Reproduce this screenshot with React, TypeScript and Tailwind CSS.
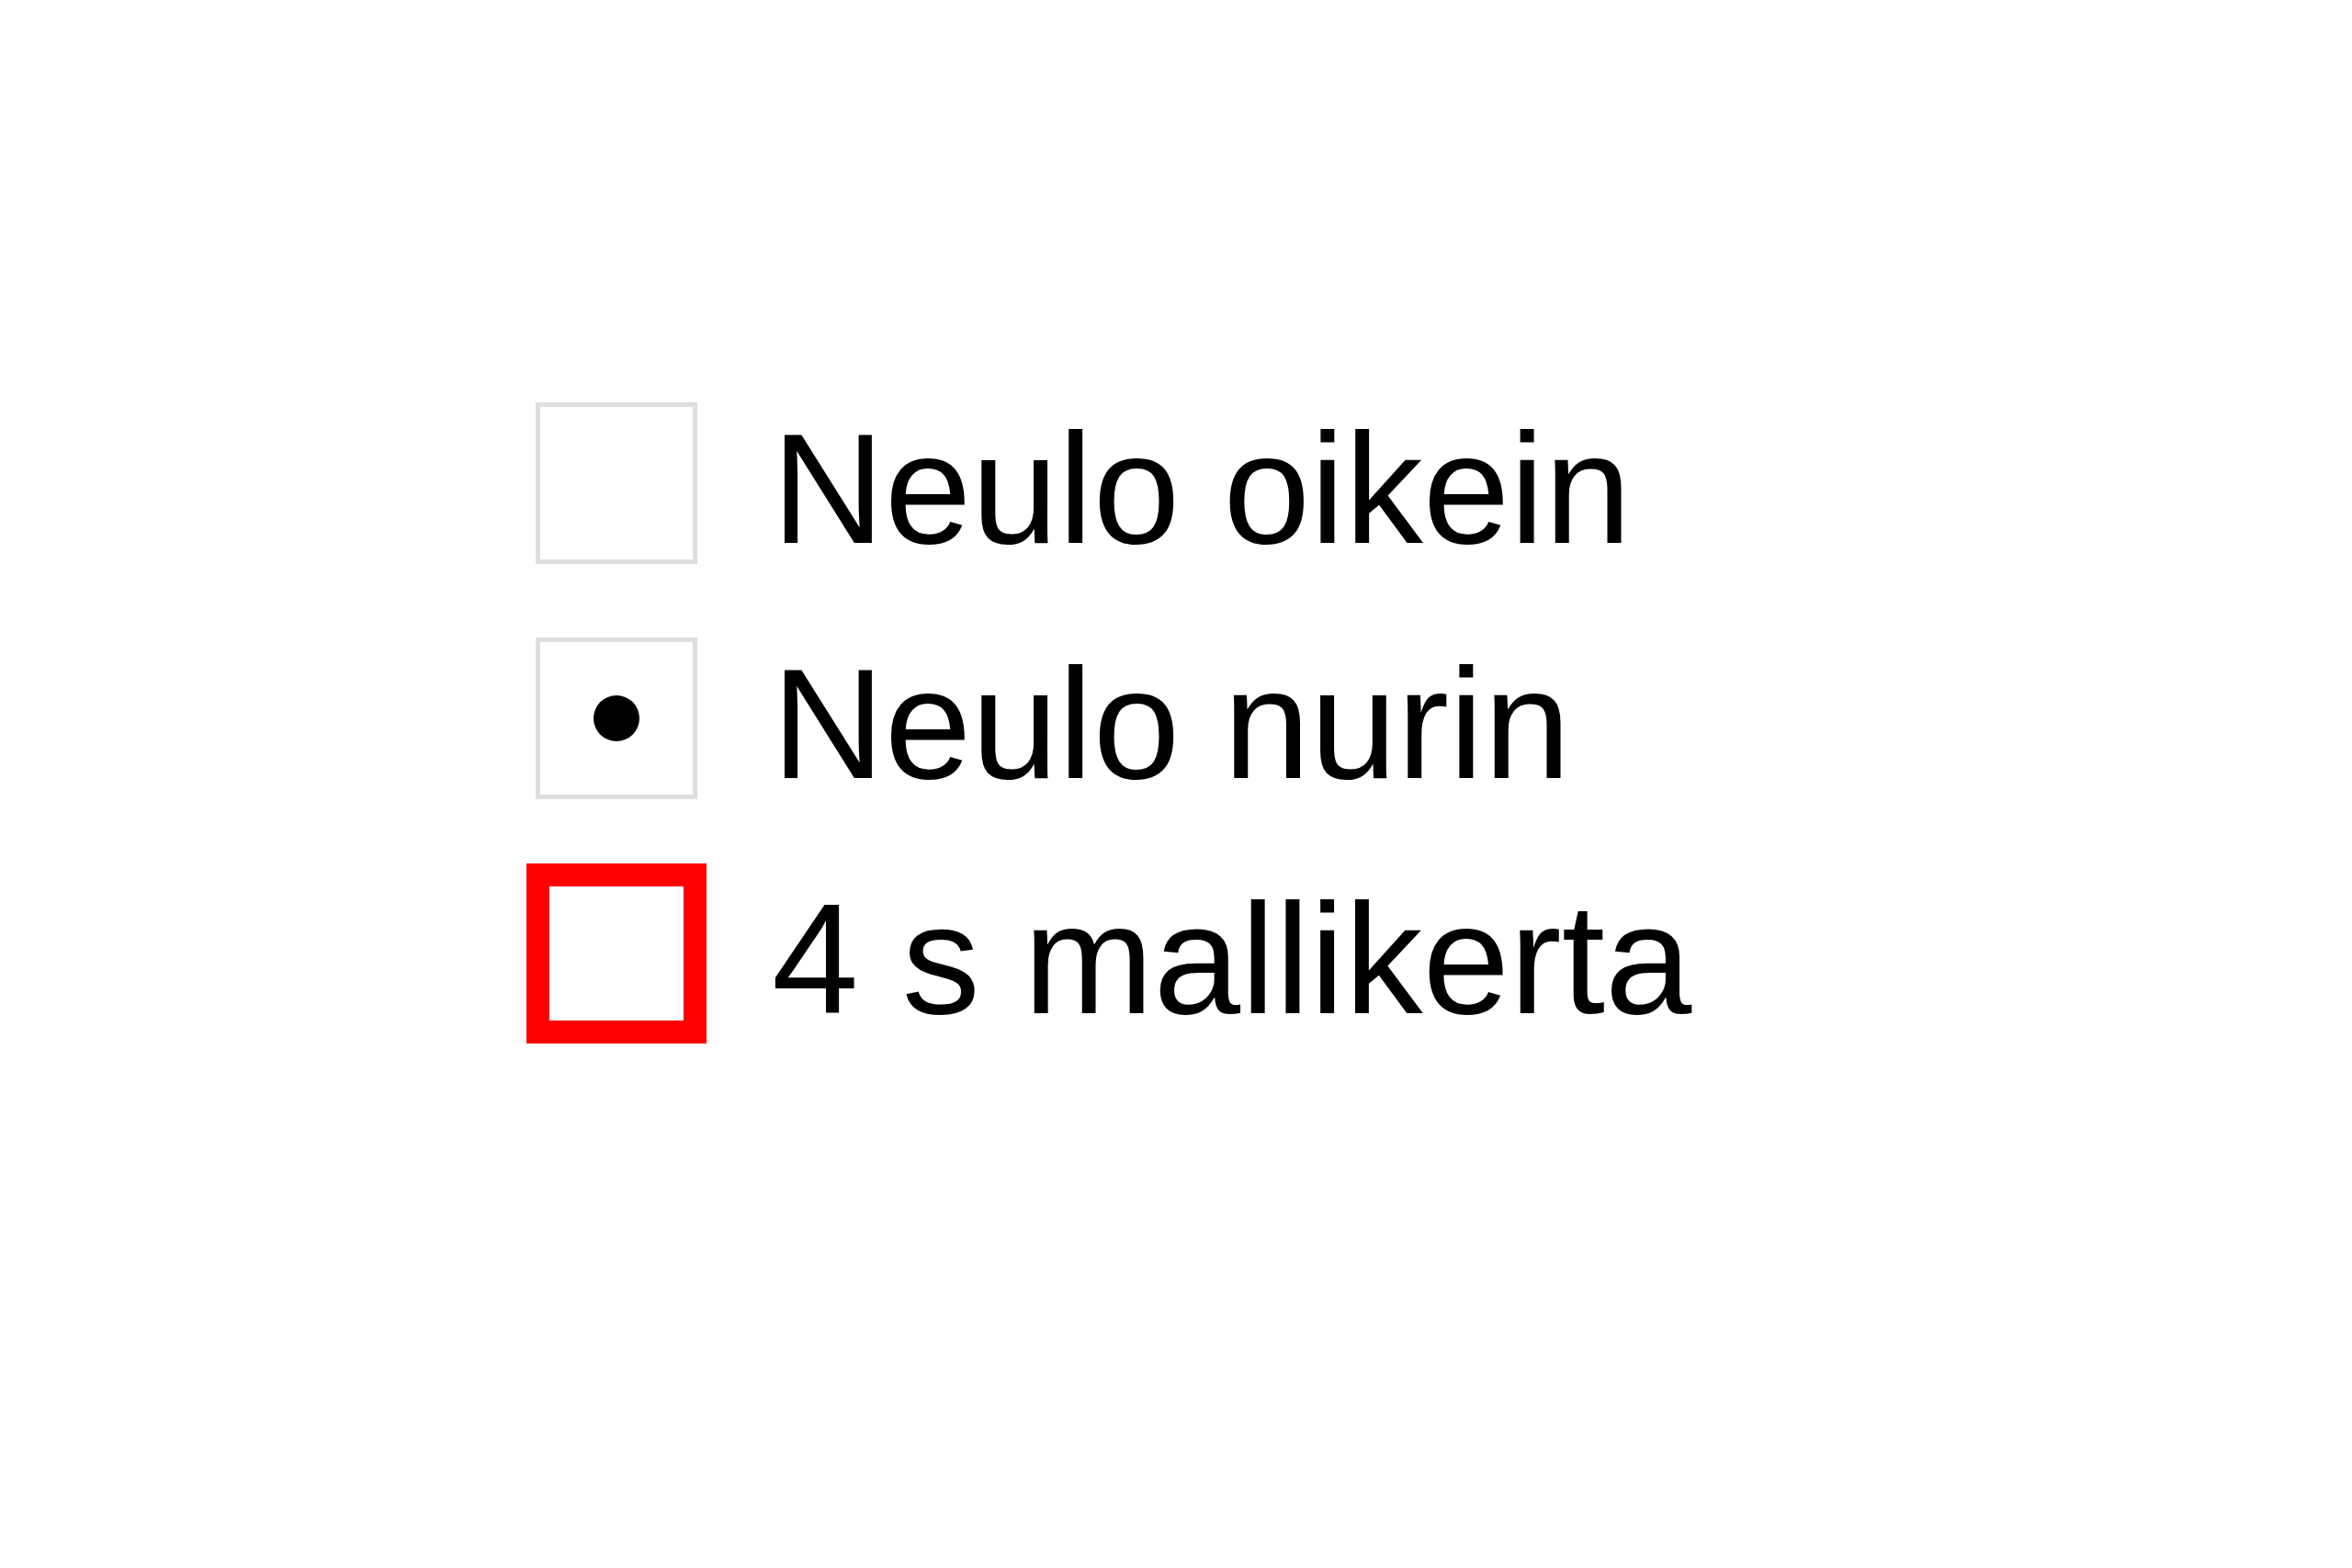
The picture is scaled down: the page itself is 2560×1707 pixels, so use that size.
export default function App() {
  const font = { fontFamily: '"Liberation Sans", Arial, sans-serif' };
  return (
    <div className="w-[2560px] h-[1707px] bg-white text-black" style={font}>
      <div className="flex flex-col pt-[398px] pl-[573px]">
        <div className="flex h-[256px] items-center">
          <div className="flex w-[196px] justify-center">
            <div className="w-[176px] h-[176px] border-[5px] border-[#dedede] bg-white" />
          </div>
          <div className="ml-[71px] mt-[12px] text-[170px] leading-none">Neulo oikein</div>
        </div>
        <div className="flex h-[256px] items-center">
          <div className="flex w-[196px] justify-center">
            <div className="flex w-[176px] h-[176px] items-center justify-center border-[5px] border-[#dedede] bg-white">
              <div className="w-[50px] h-[50px] rounded-full bg-black" />
            </div>
          </div>
          <div className="ml-[71px] mt-[12px] text-[170px] leading-none">Neulo nurin</div>
        </div>
        <div className="flex h-[256px] items-center">
          <div className="flex w-[196px] justify-center">
            <div className="w-[196px] h-[196px] border-[25px] border-[#ff0000] bg-white" />
          </div>
          <div className="ml-[71px] mt-[12px] text-[170px] leading-none">4 s mallikerta</div>
        </div>
      </div>
    </div>
  );
}
